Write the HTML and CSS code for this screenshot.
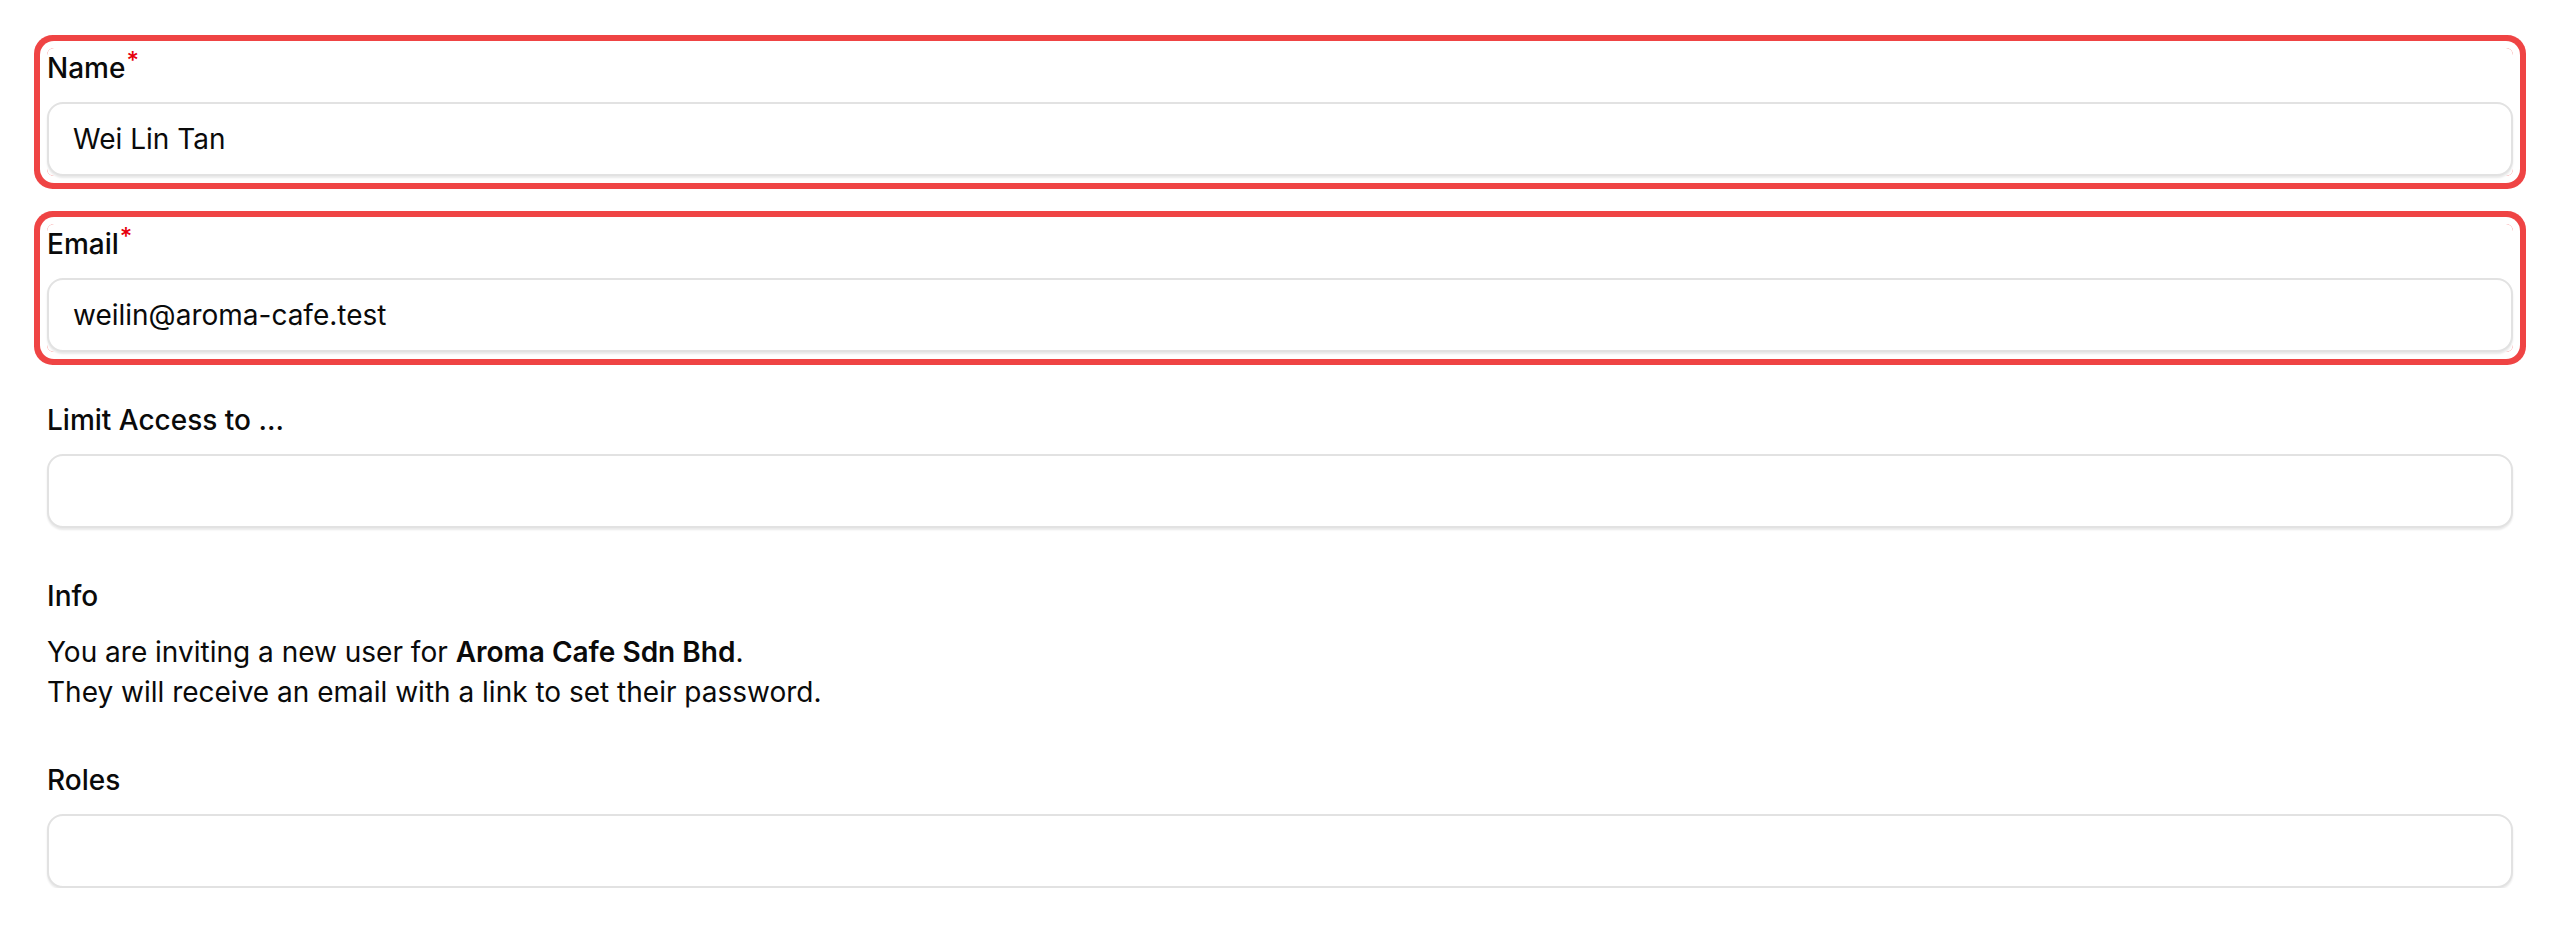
FILE: index.html
```html
<!DOCTYPE html>
<html lang="en">
<head>
<meta charset="utf-8">
<title>Invite user</title>
<link rel="stylesheet" href="styles.css">
</head>
<body>
<form class="form">
  <div class="field field-error">
    <label class="label">Name<span class="req">*</span></label>
    <div class="input">Wei Lin Tan</div>
  </div>
  <div class="field field-error">
    <label class="label">Email<span class="req">*</span></label>
    <div class="input">weilin@aroma-cafe.test</div>
  </div>
  <div class="field">
    <label class="label">Limit Access to ...</label>
    <div class="input"></div>
  </div>
  <div class="field info">
    <div class="label">Info</div>
    <p class="info-text">You are inviting a new user for <strong>Aroma Cafe Sdn Bhd</strong>.<br>They will receive an email with a link to set their password.</p>
  </div>
  <div class="field">
    <label class="label">Roles</label>
    <div class="input"></div>
  </div>
</form>
</body>
</html>
```

FILE: styles.css
```css
html, body {
  margin: 0;
  background: #ffffff;
}
body {
  padding: 48px 47px 0 47px;
  font-family: Inter, "Noto Sans", sans-serif;
  font-size: 28px;
  line-height: 40px;
  color: #0a0a0a;
}
.form {
  display: flex;
  flex-direction: column;
  gap: 48px;
}
.field {
  display: flex;
  flex-direction: column;
  gap: 14px;
  border-radius: 7px;
}
.field-error {
  box-shadow: 0 0 0 7px #ffffff, 0 0 0 13px #ef4444;
}
.label {
  display: block;
  height: 40px;
  font-weight: 500;
  color: #0a0a0a;
}
.req {
  color: #e7000b;
  font-size: 24px;
  vertical-align: 9px;
  line-height: 0;
  margin-left: 1px;
}
.input {
  box-sizing: border-box;
  height: 74px;
  border: 2px solid #e2e2e2;
  border-radius: 16px;
  padding: 15px 24px;
  background: #ffffff;
  box-shadow: 0 2px 2px rgba(0, 0, 0, 0.09);
  color: #0a0a0a;
}
.info {
  gap: 16px;
}
.info-text {
  margin: 0;
}
.info-text strong {
  font-weight: 600;
}
```
